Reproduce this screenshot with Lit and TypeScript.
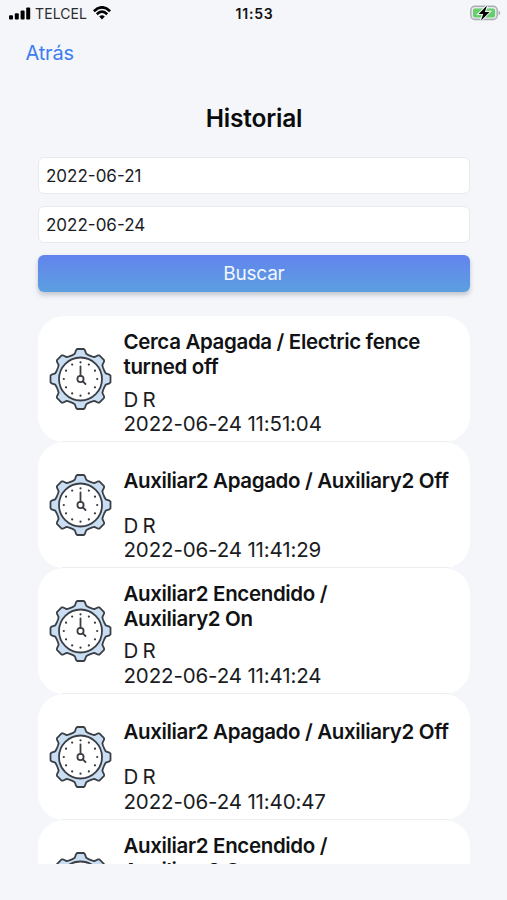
import { LitElement, html, css, svg } from "lit";
import { customElement, property } from "lit/decorators.js";

interface HistoryEvent {
  title: string[];
  device: string;
  date: string;
}

const EVENTS: HistoryEvent[] = [
  { title: ["Cerca Apagada / Electric fence", "turned off"], device: "D R", date: "2022-06-24 11:51:04" },
  { title: ["Auxiliar2 Apagado / Auxiliary2 Off"], device: "D R", date: "2022-06-24 11:41:29" },
  { title: ["Auxiliar2 Encendido /", "Auxiliary2 On"], device: "D R", date: "2022-06-24 11:41:24" },
  { title: ["Auxiliar2 Apagado / Auxiliary2 Off"], device: "D R", date: "2022-06-24 11:40:47" },
  { title: ["Auxiliar2 Encendido /", "Auxiliary2 On"], device: "", date: "" },
];

// Outline of the eight-toothed gear around the origin.
function gearPath(): string {
  const tooth: [number, number][] = [
    [-8, -23.9],
    [-5.7, -25.2],
    [-4.4, -28.9],
    [-3.3, -30],
    [3.3, -30],
    [4.4, -28.9],
    [5.7, -25.2],
    [8, -23.9],
  ];
  const pts: string[] = [];
  for (let i = 0; i < 8; i++) {
    const a = (i * Math.PI) / 4;
    for (const [x, y] of tooth) {
      const px = x * Math.cos(a) - y * Math.sin(a);
      const py = x * Math.sin(a) + y * Math.cos(a);
      pts.push(`${px.toFixed(2)} ${py.toFixed(2)}`);
    }
  }
  return `M${pts.join("L")}Z`;
}

const GEAR = gearPath();

@customElement("gear-clock")
export class GearClock extends LitElement {
  static styles = css`
    :host { display: block; width: 64px; height: 64px; }
    svg { display: block; }
    .gear { fill: #c9def2; }
    .face { fill: #fff; }
    .line { stroke: #3b3f45; stroke-width: 1.8; stroke-linejoin: round; stroke-linecap: round; }
    .none { fill: none; }
    .dot { fill: #35393f; }
  `;
  render() {
    return html`<svg width="64" height="64" viewBox="-31.5 -32 64 64">
      <path class="gear line" d=${GEAR} />
      <circle class="face line" r="21.5" />
      ${Array.from({ length: 12 }, (_, i) => {
        const a = (i * Math.PI) / 6;
        return svg`<circle class="dot" r="1.1" cx=${16.7 * Math.sin(a)} cy=${-16.7 * Math.cos(a)} />`;
      })}
      <path class="line none" d="M0 -12.7V-3M2.3 2.3L5 5" />
      <circle class="line none" r="3.1" />
    </svg>`;
  }
}

@customElement("status-bar")
export class StatusBar extends LitElement {
  static styles = css`
    :host {
      display: grid; grid-template-columns: 1fr auto 1fr; align-items: center;
      height: 28px; padding: 0 6px 0 9px; box-sizing: border-box; color: #111;
      font-size: 14px; line-height: 28px;
    }
    .left { display: flex; align-items: center; }
    .signal { margin: -2px 4px 0 0; }
    .wifi { margin-top: -2px; }
    .carrier { color: #2b2c2f; letter-spacing: 0.1px; margin-right: 6px; }
    .time { font-weight: 600; letter-spacing: 0.8px; margin-right: 1px; }
    .battery { justify-self: end; margin-top: -2px; }
    svg { display: block; }
  `;
  render() {
    return html`
      <div class="left">
        <svg class="signal" width="22" height="14" viewBox="0 0 22 14">
          <rect x="0" y="9.2" width="4" height="4.3" rx="1" />
          <rect x="5.8" y="7.3" width="4" height="6.2" rx="1" />
          <rect x="11.6" y="4.4" width="4" height="9.1" rx="1" />
          <rect x="17.2" y="1.4" width="4" height="12.1" rx="1" />
        </svg>
        <span class="carrier">TELCEL</span>
        <svg class="wifi" width="18" height="14" viewBox="0 0 18 14" fill="none" stroke="#000" stroke-width="2.6">
          <path d="M0.9 5.2Q9 -2.6 17.1 5.2M3.8 8.2Q9 3.2 14.2 8.2" />
          <path d="M6.2 10.5Q9 8 11.8 10.5L9 13.5Z" fill="#000" stroke="none" />
        </svg>
      </div>
      <span class="time">11:53</span>
      <svg class="battery" width="31" height="18" viewBox="0 0 31 18">
        <rect x="0.8" y="2.3" width="26.4" height="13.2" rx="4" fill="#e6e9eb" stroke="#a8abb0" stroke-width="1.4" />
        <rect x="3" y="4.4" width="22" height="9" rx="2" fill="#65cf6b" />
        <path d="M28.6 6.6Q30.3 7.6 30.3 9T28.6 11.4Z" fill="#a8abb0" />
        <path d="M17 1.6L8.7 9.9H13.2L11 16.4L19.5 7.9H14.8Z" fill="#000" stroke="#e9f3ec" stroke-width="2.2" paint-order="stroke" />
      </svg>
    `;
  }
}

@customElement("history-card")
export class HistoryCard extends LitElement {
  @property({ attribute: false }) event!: HistoryEvent;
  static styles = css`
    :host {
      display: grid; grid-template-columns: 86px 1fr; align-items: center;
      flex: none; height: 125.9px; box-sizing: border-box; position: relative;
      background: #fff; border-radius: 26px; color: #111214;
      font-size: 20.5px; line-height: 24.6px;
    }
    .icon { padding-left: 11px; }
    .title {
      display: flex; flex-direction: column; justify-content: center;
      height: 49.2px; margin-bottom: 8px; font-weight: 600; white-space: nowrap;
      letter-spacing: -0.35px;
    }
    .body { padding-top: 8.6px; }
    .meta { height: 24.6px; color: #1b1c1f; letter-spacing: -0.14px; white-space: nowrap; }
    .device { word-spacing: -1.2px; }
    .rule { position: absolute; left: 24px; right: 21px; bottom: -0.5px; height: 1.3px; background: #ededf0; }
  `;
  render() {
    return html`
      <gear-clock class="icon"></gear-clock>
      <div class="body">
        <div class="title">${this.event.title.map((t) => html`<span>${t}</span>`)}</div>
        <div class="meta device">${this.event.device}</div>
        <div class="meta">${this.event.date}</div>
      </div>
      <div class="rule"></div>
    `;
  }
}

@customElement("app-root")
export class AppRoot extends LitElement {
  static styles = css`
    :host {
      display: flex; flex-direction: column; height: 900px; overflow: hidden;
      background: #f4f6fa; font-family: Inter, "Liberation Sans", sans-serif;
    }
    .back { margin: 12px 0 0 25.5px; font-size: 20px; line-height: 26px; letter-spacing: -0.2px; color: #3d7df0; align-self: flex-start; }
    h1 { margin: 37px 0 0; text-align: center; font-size: 24.5px; line-height: 30px; font-weight: 600; letter-spacing: -0.2px; color: #0a0b0d; padding-left: 1px; }
    .form { display: flex; flex-direction: column; gap: 12px; margin: 24px 36.7px 0 37.5px; }
    .field {
      height: 37px; box-sizing: border-box; border: 1px solid #e8eaee; border-radius: 6px;
      background: #fff; padding: 1px 7.5px 0; font-size: 17px; line-height: 35px; color: #1b1c1f;
    }
    .search {
      height: 37px; border: 0; padding: 0; border-radius: 6px; color: #f3f6fe;
      font-family: inherit; font-size: 19px; line-height: 37px; letter-spacing: -0.2px;
      background: linear-gradient(#6384ee, #5b9fe0);
      box-shadow: 0 3px 5px rgba(60, 70, 90, 0.28);
    }
    .list { display: flex; flex-direction: column; margin: 24.4px 36.7px 0 37.5px; height: 547.3px; overflow: hidden; }
  `;
  render() {
    return html`
      <status-bar></status-bar>
      <a class="back">Atrás</a>
      <h1>Historial</h1>
      <div class="form">
        <div class="field">2022-06-21</div>
        <div class="field">2022-06-24</div>
        <button class="search">Buscar</button>
      </div>
      <div class="list">
        ${EVENTS.map((e) => html`<history-card .event=${e}></history-card>`)}
      </div>
    `;
  }
}
